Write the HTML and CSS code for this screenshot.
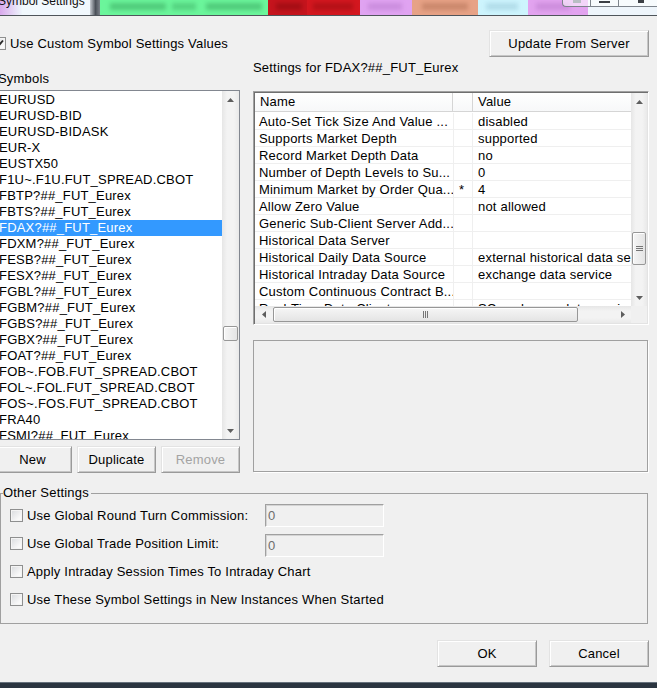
FILE: index.html
```html
<!DOCTYPE html>
<html lang="en">
<head>
    <meta charset="UTF-8">
    <meta name="viewport" content="width=device-width, initial-scale=1.0">
    <title>Symbol Settings</title>
    <link rel="stylesheet" href="styles.css">
</head>
<body>
    <!-- window caption (aero glass showing the charts behind it) -->
    <div class="titlebar">
        <span class="seg seg-lilac"></span>
        <span class="seg seg-white"></span>
        <span class="seg seg-dark"></span>
        <span class="seg seg-green">
            <i class="smudge sm-g1"></i><i class="smudge sm-g2"></i><i class="smudge sm-g3"></i>
        </span>
        <span class="seg seg-red1"><i class="smudge sm-r1"></i></span>
        <span class="seg seg-red2"><i class="smudge sm-r2"></i></span>
        <span class="seg seg-purple"><i class="smudge sm-p"></i></span>
        <span class="seg seg-salmon"><i class="smudge sm-s"></i></span>
        <span class="seg seg-cyan"><i class="smudge sm-c"></i></span>
        <span class="seg seg-purple2"><i class="smudge sm-p"></i></span>
        <span class="seg seg-glass"></span>
        <span class="title-text">Symbol Settings</span>
        <div class="caption-btns">
            <span class="cap-min"><i></i></span>
            <span class="cap-max"><i></i></span>
            <span class="cap-close"><i></i></span>
        </div>
    </div>

    <div class="dialog">
        <div class="top-row">
            <label class="check-line top-check">
                <span class="checkbox">
                    <svg width="11" height="11" viewBox="0 0 11 11"><path d="M2 5.5 L4.3 8 L9 2.5" fill="none" stroke="#2a2a2a" stroke-width="1.9"/></svg>
                </span>
                Use Custom Symbol Settings Values
            </label>
            <button class="btn btn-update">Update From Server</button>
        </div>

        <div class="main">
            <div class="left-col">
                <div class="caption symbols-caption">Symbols</div>
                <div class="listbox">
                    <ul class="list-items">
                        <li>EURUSD</li>
                        <li>EURUSD-BID</li>
                        <li>EURUSD-BIDASK</li>
                        <li>EUR-X</li>
                        <li>EUSTX50</li>
                        <li>F1U~.F1U.FUT_SPREAD.CBOT</li>
                        <li>FBTP?##_FUT_Eurex</li>
                        <li>FBTS?##_FUT_Eurex</li>
                        <li class="selected">FDAX?##_FUT_Eurex</li>
                        <li>FDXM?##_FUT_Eurex</li>
                        <li>FESB?##_FUT_Eurex</li>
                        <li>FESX?##_FUT_Eurex</li>
                        <li>FGBL?##_FUT_Eurex</li>
                        <li>FGBM?##_FUT_Eurex</li>
                        <li>FGBS?##_FUT_Eurex</li>
                        <li>FGBX?##_FUT_Eurex</li>
                        <li>FOAT?##_FUT_Eurex</li>
                        <li>FOB~.FOB.FUT_SPREAD.CBOT</li>
                        <li>FOL~.FOL.FUT_SPREAD.CBOT</li>
                        <li>FOS~.FOS.FUT_SPREAD.CBOT</li>
                        <li>FRA40</li>
                        <li>FSMI?##_FUT_Eurex</li>
                    </ul>
                    <div class="vscroll list-vscroll">
                        <div class="sb-arrow"><svg width="7" height="4" viewBox="0 0 7 4"><path d="M0 4 L3.5 0 L7 4Z" fill="#5e5e5e"/></svg></div>
                        <div class="sb-track"><div class="thumb-v list-thumb"></div></div>
                        <div class="sb-arrow"><svg width="7" height="4" viewBox="0 0 7 4"><path d="M0 0 L3.5 4 L7 0Z" fill="#5e5e5e"/></svg></div>
                    </div>
                </div>
                <div class="list-buttons">
                    <button class="btn btn-small">New</button>
                    <button class="btn btn-small">Duplicate</button>
                    <button class="btn btn-small" disabled>Remove</button>
                </div>
            </div>

            <div class="right-col">
                <div class="caption settings-caption">Settings for FDAX?##_FUT_Eurex</div>
                <div class="propgrid">
                    <div class="grid-top">
                        <div class="grid-table">
                            <div class="grid-head">
                                <div class="h-name">Name</div>
                                <div class="h-mark"></div>
                                <div class="h-value">Value</div>
                            </div>
                            <div class="grid-rows">
                                <div class="g-row"><div class="c-name">Auto-Set Tick Size And Value ...</div><div class="c-mark"></div><div class="c-value">disabled</div></div>
                                <div class="g-row"><div class="c-name">Supports Market Depth</div><div class="c-mark"></div><div class="c-value">supported</div></div>
                                <div class="g-row"><div class="c-name">Record Market Depth Data</div><div class="c-mark"></div><div class="c-value">no</div></div>
                                <div class="g-row"><div class="c-name">Number of Depth Levels to Su...</div><div class="c-mark"></div><div class="c-value">0</div></div>
                                <div class="g-row"><div class="c-name">Minimum Market by Order Qua...</div><div class="c-mark">*</div><div class="c-value">4</div></div>
                                <div class="g-row"><div class="c-name">Allow Zero Value</div><div class="c-mark"></div><div class="c-value">not allowed</div></div>
                                <div class="g-row"><div class="c-name">Generic Sub-Client Server Add...</div><div class="c-mark"></div><div class="c-value"></div></div>
                                <div class="g-row"><div class="c-name">Historical Data Server</div><div class="c-mark"></div><div class="c-value"></div></div>
                                <div class="g-row"><div class="c-name">Historical Daily Data Source</div><div class="c-mark"></div><div class="c-value">external historical data service</div></div>
                                <div class="g-row"><div class="c-name">Historical Intraday Data Source</div><div class="c-mark"></div><div class="c-value">exchange data service</div></div>
                                <div class="g-row"><div class="c-name">Custom Continuous Contract B...</div><div class="c-mark"></div><div class="c-value"></div></div>
                                <div class="g-row"><div class="c-name">Real-Time Data Client</div><div class="c-mark"></div><div class="c-value">SC exchange data service</div></div>
                            </div>
                        </div>
                        <div class="vscroll grid-vscroll">
                            <div class="sb-arrow"><svg width="7" height="4" viewBox="0 0 7 4"><path d="M0 4 L3.5 0 L7 4Z" fill="#5e5e5e"/></svg></div>
                            <div class="sb-track">
                                <div class="thumb-v grid-thumb">
                                    <svg width="7" height="7" viewBox="0 0 7 7"><path d="M0 1.5 H7 M0 3.5 H7 M0 5.5 H7" stroke="#767676" stroke-width="1"/></svg>
                                </div>
                            </div>
                            <div class="sb-arrow"><svg width="7" height="4" viewBox="0 0 7 4"><path d="M0 0 L3.5 4 L7 0Z" fill="#5e5e5e"/></svg></div>
                        </div>
                    </div>
                    <div class="grid-bottom">
                        <div class="hscroll">
                            <div class="sb-arrow-h"><svg width="4" height="7" viewBox="0 0 4 7"><path d="M4 0 L0 3.5 L4 7Z" fill="#5e5e5e"/></svg></div>
                            <div class="sb-track-h">
                                <div class="thumb-h">
                                    <svg width="7" height="7" viewBox="0 0 7 7"><path d="M1.5 0 V7 M3.5 0 V7 M5.5 0 V7" stroke="#767676" stroke-width="1"/></svg>
                                </div>
                            </div>
                            <div class="sb-arrow-h"><svg width="4" height="7" viewBox="0 0 4 7"><path d="M0 0 L4 3.5 L0 7Z" fill="#5e5e5e"/></svg></div>
                        </div>
                        <div class="corner"></div>
                    </div>
                </div>
                <div class="desc-box"></div>
            </div>
        </div>

        <fieldset class="other">
            <legend>Other Settings</legend>
            <div class="opt-row">
                <label class="opt-label"><span class="checkbox"></span>Use Global Round Turn Commission:</label>
                <div class="textbox">0</div>
            </div>
            <div class="opt-row">
                <label class="opt-label"><span class="checkbox"></span>Use Global Trade Position Limit:</label>
                <div class="textbox textbox-low">0</div>
            </div>
            <div class="opt-row">
                <label class="opt-label wide"><span class="checkbox"></span>Apply Intraday Session Times To Intraday Chart</label>
            </div>
            <div class="opt-row">
                <label class="opt-label wide"><span class="checkbox"></span>Use These Symbol Settings in New Instances When Started</label>
            </div>
        </fieldset>

        <div class="footer-buttons">
            <button class="btn btn-footer">OK</button>
            <button class="btn btn-footer">Cancel</button>
        </div>
    </div>

    <div class="taskbar"></div>
</body>
</html>
```

FILE: styles.css
```css
* {
    margin: 0;
    padding: 0;
    box-sizing: border-box;
}

body {
    width: 657px;
    height: 688px;
    overflow: hidden;
    background: #f0f0f0;
    font-family: "Liberation Sans", Arial, sans-serif;
    font-size: 13px;
    letter-spacing: 0.2px;
    color: #000000;
}

/* ---------- caption ---------- */

.titlebar {
    position: relative;
    display: flex;
    height: 16px;
    border-bottom: 1px solid #4f555b;
    overflow: hidden;
    letter-spacing: 0;
}

.seg {
    position: relative;
    flex: none;
    height: 100%;
    overflow: hidden;
}

.seg-lilac { width: 22px; background: linear-gradient(to right, #d9a9ec, #eef6fc); }
.seg-white { width: 68px; background: #f1f8fd; }
.seg-dark { width: 10px; background: linear-gradient(to right, #c9ced4, #4b5159 55%, #7c828a); }
.seg-green { width: 168px; background: #6bf59b; }
.seg-red1 { width: 39px; background: #c5141d; }
.seg-red2 { width: 53px; background: #d3171f; }
.seg-purple { width: 52px; background: #e0a3f1; }
.seg-salmon { width: 66px; background: #e7a286; }
.seg-cyan { width: 50px; background: #cdf4fd; }
.seg-purple2 { width: 60px; background: #e2a3ef; }
.seg-glass { flex: 1; background: #eef5fb; }

.smudge {
    position: absolute;
    top: 3px;
    height: 7px;
    filter: blur(2px);
}

.sm-g1 { left: 10px; width: 56px; background: rgba(20, 110, 50, 0.3); }
.sm-g2 { left: 72px; width: 24px; background: rgba(20, 110, 50, 0.25); }
.sm-g3 { left: 106px; width: 56px; background: rgba(20, 110, 50, 0.3); }
.sm-r1 { left: 8px; width: 26px; background: rgba(90, 0, 0, 0.3); }
.sm-r2 { left: 6px; width: 40px; background: rgba(90, 0, 0, 0.25); }
.sm-p { left: 8px; width: 34px; background: rgba(120, 60, 150, 0.2); }
.sm-s { left: 10px; width: 46px; background: rgba(120, 60, 30, 0.25); }
.sm-c { left: 8px; width: 32px; background: rgba(60, 120, 150, 0.18); }

.title-text {
    position: absolute;
    left: -2px;
    top: -6px;
    font-size: 12px;
    line-height: 14px;
    color: #111111;
}

.caption-btns {
    position: absolute;
    top: 0;
    right: 0;
    width: 95px;
    height: 7px;
    display: flex;
    border: 1px solid #7d848c;
    border-top: none;
    border-right: none;
    border-bottom-left-radius: 4px;
    background: rgba(255, 255, 255, 0.55);
}

.caption-btns span {
    display: flex;
    justify-content: center;
    align-items: flex-start;
}

.caption-btns span + span {
    border-left: 1px solid #7d848c;
}

.cap-min { width: 27px; }
.cap-max { width: 28px; }
.cap-close { flex: 1; }

.cap-min i { width: 8px; height: 3px; background: #b9bec4; }
.cap-max i { width: 11px; height: 2px; margin-top: 1px; background: #3b3f44; }
.cap-close i { width: 6px; height: 3px; margin-left: 6px; background: #3b3f44; }

/* ---------- dialog ---------- */

.dialog {
    padding-right: 8px;
}

.top-row {
    display: flex;
    justify-content: space-between;
    align-items: center;
    margin-top: 14px;
    height: 27px;
}

.check-line {
    display: flex;
    align-items: center;
    gap: 4px;
}

.top-check {
    margin-left: -7px;
}

.checkbox {
    display: flex;
    align-items: center;
    justify-content: center;
    flex: none;
    width: 13px;
    height: 13px;
    border: 1px solid #8e8f8f;
    background: linear-gradient(135deg, #d9dbde, #f9f9f9 75%);
    box-shadow: inset 0 0 0 1px #f4f4f4;
}

.btn {
    font: inherit;
    letter-spacing: inherit;
    color: #000000;
    height: 27px;
    background: #f0f0f0;
    border: 1px solid;
    border-color: #e3e3e3 #9a9a9a #9a9a9a #e3e3e3;
    box-shadow: inset 1px 1px 0 #ffffff, inset -1px -1px 0 #c6c6c6;
}

.btn:disabled {
    color: #a3a3a3;
}

.btn-update {
    width: 160px;
}

.main {
    display: flex;
    gap: 13px;
}

.caption {
    line-height: 16px;
    white-space: nowrap;
}

.left-col {
    width: 247px;
    margin-left: -7px;
}

.symbols-caption {
    margin-top: 14px;
    padding-left: 5px;
}

.listbox {
    display: flex;
    height: 350px;
    margin-top: 3px;
    border: 1px solid #828790;
    background: #ffffff;
}

.list-items {
    list-style: none;
    flex: 1;
    padding-top: 1px;
    overflow: hidden;
}

.list-items li {
    height: 16px;
    line-height: 16px;
    padding-left: 5px;
    white-space: nowrap;
}

.list-items li.selected {
    background: #3399ff;
    color: #ffffff;
}

.vscroll {
    flex: none;
    display: flex;
    flex-direction: column;
    background: linear-gradient(to right, #e6e6e6, #f3f3f3 30%, #f3f3f3 70%, #e9e9e9);
}

.list-vscroll { width: 17px; }
.grid-vscroll { width: 16px; }

.sb-arrow {
    flex: none;
    height: 17px;
    display: flex;
    align-items: center;
    justify-content: center;
}

.sb-track {
    flex: 1;
    overflow: hidden;
}

.thumb-v {
    display: flex;
    align-items: center;
    justify-content: center;
    margin: 0 1px;
    border: 1px solid #979797;
    border-radius: 2px;
    background: linear-gradient(to right, #f6f6f6, #e4e4e4);
    box-shadow: inset 1px 1px 0 #ffffff;
}

.list-thumb {
    height: 15px;
    margin-top: 218px;
}

.grid-thumb {
    height: 33px;
    margin-top: 122px;
}

.list-buttons {
    display: flex;
    gap: 5px;
    margin-top: 6px;
}

.btn-small {
    width: 79px;
}

/* ---------- property grid ---------- */

.right-col {
    width: 396px;
}

.settings-caption {
    margin-top: 3px;
}

.propgrid {
    display: flex;
    flex-direction: column;
    height: 234px;
    margin-top: 15px;
    padding: 1px;
    border: 1px solid;
    border-color: #a0a0a0 #ffffff #ffffff #a0a0a0;
    box-shadow: inset 1px 1px 0 #6f6f6f, inset -1px -1px 0 #e3e3e3;
    background: #f0f0f0;
}

.grid-top {
    flex: 1;
    display: flex;
    min-height: 0;
}

.grid-table {
    flex: 1;
    background: #ffffff;
    overflow: hidden;
}

.grid-head {
    display: flex;
    height: 19px;
    line-height: 18px;
    border-bottom: 1px solid #d5d5d5;
    background: linear-gradient(#ffffff, #f7f8f9);
}

.h-name {
    width: 198px;
    padding-left: 5px;
    border-right: 1px solid #d5d5d5;
}

.h-mark {
    width: 20px;
    border-right: 1px solid #d5d5d5;
}

.h-value {
    flex: 1;
    padding-left: 5px;
}

.grid-rows {
    padding-top: 1px;
}

.g-row {
    display: flex;
    height: 17px;
    line-height: 17px;
    border-bottom: 1px solid #efefef;
    white-space: nowrap;
}

.c-name {
    width: 199px;
    padding-left: 4px;
    border-right: 1px solid #efefef;
    overflow: hidden;
}

.c-mark {
    width: 19px;
    padding-left: 5px;
    border-right: 1px solid #efefef;
}

.c-value {
    flex: 1;
    padding-left: 5px;
    overflow: hidden;
}

.grid-bottom {
    display: flex;
    height: 17px;
    flex: none;
}

.hscroll {
    flex: 1;
    display: flex;
    background: linear-gradient(#e6e6e6, #f3f3f3 30%, #f3f3f3 70%, #e9e9e9);
}

.sb-arrow-h {
    flex: none;
    width: 17px;
    display: flex;
    align-items: center;
    justify-content: center;
}

.sb-track-h {
    flex: 1;
    padding: 1px 0;
}

.thumb-h {
    display: flex;
    align-items: center;
    justify-content: center;
    width: 305px;
    height: 15px;
    margin-left: 1px;
    border: 1px solid #979797;
    border-radius: 2px;
    background: linear-gradient(#f6f6f6, #e4e4e4);
    box-shadow: inset 1px 1px 0 #ffffff;
}

.corner {
    width: 16px;
    background: #f0f0f0;
}

.desc-box {
    width: 395px;
    height: 132px;
    margin-top: 15px;
    border: 1px solid #a0a0a0;
    box-shadow: 1px 1px 0 #ffffff;
}

/* ---------- other settings ---------- */

.other {
    width: 648px;
    min-width: 0;
    margin: 12px 0 0 0;
    padding: 0 0 10px 0;
    border: 1px solid #a0a0a0;
}

.other legend {
    margin-left: 2px;
    padding: 0 2px 0 0;
    line-height: 16px;
}

.opt-row {
    display: flex;
    align-items: center;
    height: 28px;
    padding-left: 9px;
}

.opt-label {
    display: flex;
    align-items: center;
    gap: 4px;
    width: 255px;
    white-space: nowrap;
}

.opt-label.wide {
    width: auto;
}

.textbox {
    width: 119px;
    height: 23px;
    padding-left: 2px;
    line-height: 21px;
    color: #6d6d6d;
    border: 1px solid;
    border-color: #a0a0a0 #ffffff #ffffff #a0a0a0;
    box-shadow: inset 1px 1px 0 #d4d4d4;
}

.textbox-low {
    margin-top: 5px;
}

.footer-buttons {
    display: flex;
    justify-content: flex-end;
    gap: 12px;
    margin-top: 16px;
}

.btn-footer {
    width: 100px;
}

.taskbar {
    height: 6px;
    margin-top: 15px;
    border-top: 1px solid #66717c;
    background: #2b3540;
}
```
